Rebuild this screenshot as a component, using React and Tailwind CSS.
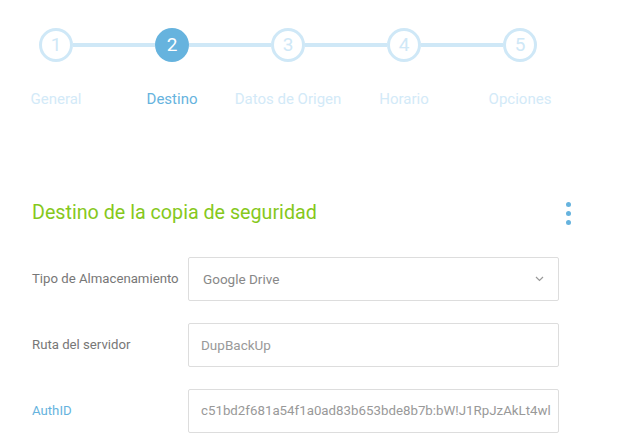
import React from 'react';

const steps = [
  { n: 1, label: 'General' },
  { n: 2, label: 'Destino', active: true },
  { n: 3, label: 'Datos de Origen' },
  { n: 4, label: 'Horario' },
  { n: 5, label: 'Opciones' },
];

const font = { fontFamily: 'Roboto, "Liberation Sans", sans-serif' };

const Stepper = () => (
  <div className="flex ml-[-2px] pt-[28px]">
    {steps.map((s, i) => (
      <div key={s.n} className="w-[116px] flex flex-col items-center">
        <div className="w-full flex items-center">
          <div className={`flex-1 h-[4px] ${i === 0 ? '' : 'bg-[#cfe8f7]'}`} />
          <div
            className={
              s.active
                ? 'w-[34px] h-[34px] rounded-full bg-[#66b3de] text-white flex items-center justify-center text-[19px]'
                : 'w-[34px] h-[34px] rounded-full border-[3px] border-[#cfe8f7] text-[#cfe8f7] flex items-center justify-center text-[19px]'
            }
          >
            {s.n}
          </div>
          <div className={`flex-1 h-[4px] ${i === steps.length - 1 ? '' : 'bg-[#cfe8f7]'}`} />
        </div>
        <div className={`mt-[27px] text-[15px] leading-[20px] whitespace-nowrap ${s.active ? 'text-[#66b3de]' : 'text-[#d3eaf8]'}`}>
          {s.label}
        </div>
      </div>
    ))}
  </div>
);

const Field = ({ label, labelClass = 'text-[#777]', children }) => (
  <div className="flex items-center">
    <div className={`w-[156px] text-[13.2px] whitespace-nowrap ${labelClass}`}>{label}</div>
    <div className="w-[371px]">{children}</div>
  </div>
);

export default function App() {
  return (
    <div className="w-[637px] h-[447px] bg-white overflow-hidden" style={font}>
      <Stepper />
      <div className="pl-[32px] pr-[62px] mt-[90px]">
        <div className="flex items-center justify-between">
          <h2 className="text-[19.7px] leading-[28px] text-[#86c81c]">Destino de la copia de seguridad</h2>
          <div className="flex flex-col gap-[4px] mr-[4px]">
            <span className="w-[5px] h-[5px] rounded-full bg-[#66b3de]" />
            <span className="w-[5px] h-[5px] rounded-full bg-[#66b3de]" />
            <span className="w-[5px] h-[5px] rounded-full bg-[#66b3de]" />
          </div>
        </div>
        <div className="mt-[30px] flex flex-col gap-[22px]">
          <Field label="Tipo de Almacenamiento">
            <div className="h-[44px] border border-[#ddd] rounded-[2px] flex items-center justify-between px-[14px] text-[13.5px] text-[#888]">
              <span>Google Drive</span>
              <svg width="9" height="6" viewBox="0 0 9 6" fill="none" stroke="#999" strokeWidth="1.2">
                <path d="M1 1l3.5 3.5L8 1" />
              </svg>
            </div>
          </Field>
          <Field label="Ruta del servidor">
            <div className="h-[44px] border border-[#ddd] rounded-[2px] flex items-center px-[12px] text-[13.5px] text-[#999]">
              DupBackUp
            </div>
          </Field>
          <Field label="AuthID" labelClass="text-[#66b3de]">
            <div className="h-[44px] border border-[#ddd] rounded-[2px] flex items-center px-[12px] text-[13.3px] text-[#999] overflow-hidden whitespace-nowrap">
              c51bd2f681a54f1a0ad83b653bde8b7b:bW!J1RpJzAkLt4wl
            </div>
          </Field>
        </div>
      </div>
    </div>
  );
}
